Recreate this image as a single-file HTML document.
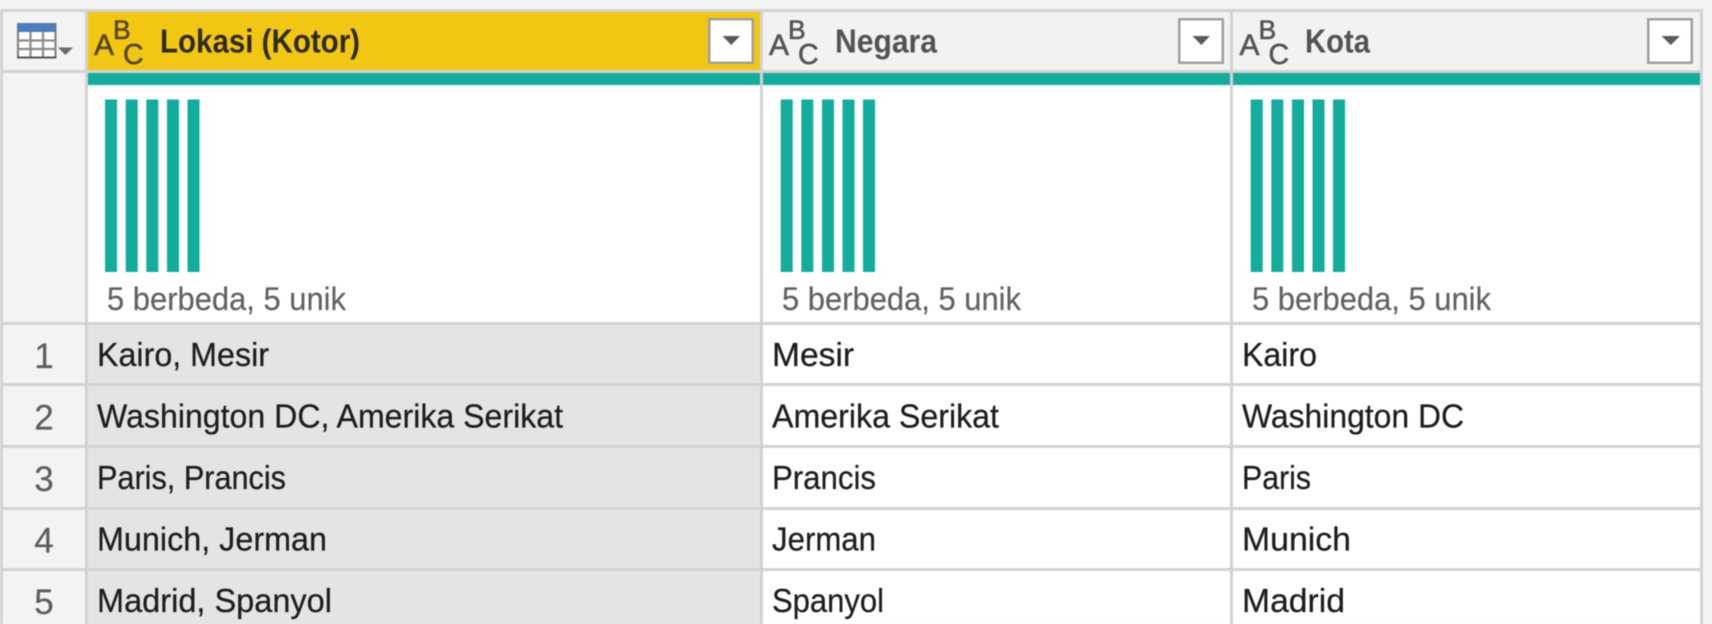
<!DOCTYPE html>
<html>
<head>
<meta charset="utf-8">
<style>
html,body{margin:0;padding:0;background:#f4f4f4;width:1712px;height:624px;overflow:hidden}
svg{display:block;filter:blur(.4px)}
text{font-family:"Liberation Sans",sans-serif}
.c{font-size:33px;fill:#1e1d1c;stroke:#1e1d1c;stroke-width:.25px}
.n{font-size:35px;fill:#5f5e5c;text-anchor:middle;stroke:#5f5e5c;stroke-width:.2px}
.s{font-size:32px;fill:#636160;stroke:#636160;stroke-width:.2px}
.h{font-size:33px;font-weight:bold;fill:#555351}
.a,.b,.d{fill:#575554;stroke:#575554;stroke-width:.6px}
.a{font-size:30px}
.b{font-size:26.500px}
.d{font-size:28.500px}
.y{fill:#574818;stroke:#574818}
</style>
</head>
<body>
<svg width="1712" height="624" viewBox="0 0 1712 624" xmlns="http://www.w3.org/2000/svg">
<rect width="1712" height="624" fill="#f4f4f4"/>
<rect x="0" y="9" width="1703" height="615" fill="#d3d3d3"/>
<rect x="3" y="12" width="82" height="58" fill="#f3f3f3"/>
<rect x="3" y="73" width="82" height="249" fill="#f3f3f3"/>
<rect x="3" y="325" width="82" height="58" fill="#f3f3f3"/>
<rect x="3" y="386" width="82" height="59" fill="#f3f3f3"/>
<rect x="3" y="448" width="82" height="59" fill="#f3f3f3"/>
<rect x="3" y="510" width="82" height="58" fill="#f3f3f3"/>
<rect x="3" y="571" width="82" height="53" fill="#f3f3f3"/>

<rect x="88" y="12" width="672" height="58" fill="#f2c713"/>
<rect x="763" y="12" width="467" height="58" fill="#f3f2f1"/>
<rect x="1233" y="12" width="467" height="58" fill="#f3f2f1"/>

<rect x="88" y="73" width="672" height="12" fill="#12ad9d"/>
<rect x="763" y="73" width="467" height="12" fill="#12ad9d"/>
<rect x="1233" y="73" width="467" height="12" fill="#12ad9d"/>
<rect x="88" y="85" width="672" height="237" fill="#fff"/>
<rect x="763" y="85" width="467" height="237" fill="#fff"/>
<rect x="1233" y="85" width="467" height="237" fill="#fff"/>

<g fill="#e4e4e4">
<rect x="88" y="325" width="672" height="58"/>
<rect x="88" y="386" width="672" height="59"/>
<rect x="88" y="448" width="672" height="59"/>
<rect x="88" y="510" width="672" height="58"/>
<rect x="88" y="571" width="672" height="53"/>
</g>
<g fill="#fff">
<rect x="763" y="325" width="467" height="58"/>
<rect x="763" y="386" width="467" height="59"/>
<rect x="763" y="448" width="467" height="59"/>
<rect x="763" y="510" width="467" height="58"/>
<rect x="763" y="571" width="467" height="53"/>
<rect x="1233" y="325" width="467" height="58"/>
<rect x="1233" y="386" width="467" height="59"/>
<rect x="1233" y="448" width="467" height="59"/>
<rect x="1233" y="510" width="467" height="58"/>
<rect x="1233" y="571" width="467" height="53"/>
</g>

<!-- table icon -->
<rect x="18" y="24" width="37.500" height="33.500" fill="#fff" stroke="#7c7d7f" stroke-width="2"/>
<rect x="17.500" y="23.500" width="38.500" height="8.500" fill="#4a7ebd"/>
<path d="M30.500 32V58M43 32V58M18 40.500H56M18 49H56" stroke="#8b8c8e" stroke-width="2.200" fill="none"/>
<path d="M17 57.500H56.500" stroke="#55565a" stroke-width="2"/>
<path d="M58 47.500H73L65.500 55Z" fill="#6a6a6a"/>

<!-- ABC icons -->
<text x="94" y="55" class="a y">A</text>
<text x="113" y="39" class="b y">B</text>
<text x="123" y="64" class="d y">C</text>
<text x="769" y="55" class="a">A</text>
<text x="788" y="39" class="b">B</text>
<text x="798" y="64" class="d">C</text>
<text x="1239.500" y="55" class="a">A</text>
<text x="1258.500" y="39" class="b">B</text>
<text x="1268.500" y="64" class="d">C</text>

<!-- headers -->
<text x="160" y="52.500" class="h" style="fill:#2f2a14" textLength="200" lengthAdjust="spacingAndGlyphs">Lokasi (Kotor)</text>
<text x="835" y="52.500" class="h" textLength="102" lengthAdjust="spacingAndGlyphs">Negara</text>
<text x="1305" y="52.500" class="h" textLength="65" lengthAdjust="spacingAndGlyphs">Kota</text>

<!-- dropdown buttons -->
<g fill="#fff" stroke="#a09f9d" stroke-width="2.500">
<rect x="709.250" y="19.250" width="43.500" height="43.500"/>
<rect x="1179.250" y="19.250" width="43.500" height="43.500"/>
<rect x="1648.250" y="19.250" width="43.500" height="43.500"/>
</g>
<g fill="#5c5a58">
<path d="M722.500 36H740L731.250 45Z"/>
<path d="M1192.500 36H1210L1201.250 45Z"/>
<path d="M1661.500 36H1680L1670.750 45Z"/>
</g>

<!-- bars -->
<g fill="#12ad9d">
<rect x="105" y="99.500" width="12" height="172.500"/>
<rect x="125.700" y="99.500" width="12" height="172.500"/>
<rect x="146.300" y="99.500" width="12" height="172.500"/>
<rect x="167" y="99.500" width="12" height="172.500"/>
<rect x="187.500" y="99.500" width="12" height="172.500"/>
<rect x="780.700" y="99.500" width="12" height="172.500"/>
<rect x="801.300" y="99.500" width="12" height="172.500"/>
<rect x="822" y="99.500" width="12" height="172.500"/>
<rect x="842.500" y="99.500" width="12" height="172.500"/>
<rect x="863" y="99.500" width="12" height="172.500"/>
<rect x="1250.700" y="99.500" width="12" height="172.500"/>
<rect x="1271.300" y="99.500" width="12" height="172.500"/>
<rect x="1292" y="99.500" width="12" height="172.500"/>
<rect x="1312.500" y="99.500" width="12" height="172.500"/>
<rect x="1333" y="99.500" width="12" height="172.500"/>
</g>

<!-- stats -->
<text x="107" y="310" class="s" textLength="239" lengthAdjust="spacingAndGlyphs">5 berbeda, 5 unik</text>
<text x="782" y="310" class="s" textLength="239" lengthAdjust="spacingAndGlyphs">5 berbeda, 5 unik</text>
<text x="1252" y="310" class="s" textLength="239" lengthAdjust="spacingAndGlyphs">5 berbeda, 5 unik</text>

<!-- row numbers -->
<text x="44" y="368" class="n">1</text>
<text x="44" y="429.500" class="n">2</text>
<text x="44" y="491" class="n">3</text>
<text x="44" y="552.500" class="n">4</text>
<text x="44" y="614" class="n">5</text>

<!-- cells -->
<text x="97" y="366" class="c" textLength="172" lengthAdjust="spacingAndGlyphs">Kairo, Mesir</text>
<text x="97" y="427.500" class="c" textLength="466" lengthAdjust="spacingAndGlyphs">Washington DC, Amerika Serikat</text>
<text x="97" y="489" class="c" textLength="189" lengthAdjust="spacingAndGlyphs">Paris, Prancis</text>
<text x="97" y="550.500" class="c" textLength="230" lengthAdjust="spacingAndGlyphs">Munich, Jerman</text>
<text x="97" y="612" class="c" textLength="235" lengthAdjust="spacingAndGlyphs">Madrid, Spanyol</text>

<text x="772" y="366" class="c" textLength="82" lengthAdjust="spacingAndGlyphs">Mesir</text>
<text x="772" y="427.500" class="c" textLength="227" lengthAdjust="spacingAndGlyphs">Amerika Serikat</text>
<text x="772" y="489" class="c" textLength="104" lengthAdjust="spacingAndGlyphs">Prancis</text>
<text x="772" y="550.500" class="c" textLength="104" lengthAdjust="spacingAndGlyphs">Jerman</text>
<text x="772" y="612" class="c" textLength="112" lengthAdjust="spacingAndGlyphs">Spanyol</text>

<text x="1242" y="366" class="c" textLength="75" lengthAdjust="spacingAndGlyphs">Kairo</text>
<text x="1242" y="427.500" class="c" textLength="222" lengthAdjust="spacingAndGlyphs">Washington DC</text>
<text x="1242" y="489" class="c" textLength="69" lengthAdjust="spacingAndGlyphs">Paris</text>
<text x="1242" y="550.500" class="c" textLength="109" lengthAdjust="spacingAndGlyphs">Munich</text>
<text x="1242" y="612" class="c" textLength="103" lengthAdjust="spacingAndGlyphs">Madrid</text>
</svg>
</body>
</html>
